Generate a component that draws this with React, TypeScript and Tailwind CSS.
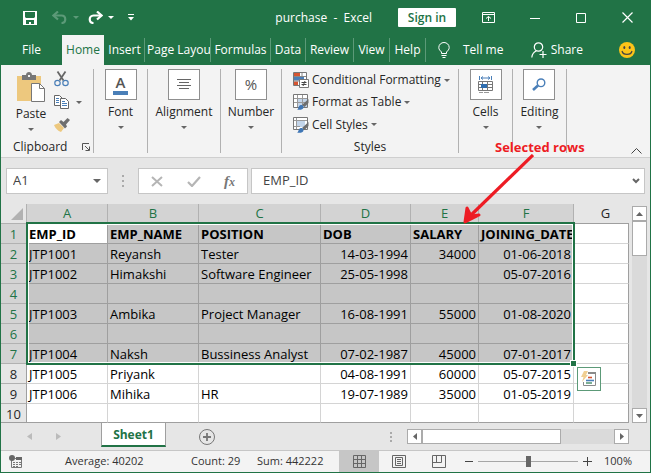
import React from "react";

type Row = [string, string, string, string, string, string];

const columns = ["A", "B", "C", "D", "E", "F", "G"];

const rows: Row[] = [
  ["EMP_ID", "EMP_NAME", "POSITION", "DOB", "SALARY", "JOINING_DATE"],
  ["JTP1001", "Reyansh", "Tester", "14-03-1994", "34000", "01-06-2018"],
  ["JTP1002", "Himakshi", "Software Engineer", "25-05-1998", "", "05-07-2016"],
  ["", "", "", "", "", ""],
  ["JTP1003", "Ambika", "Project Manager", "16-08-1991", "55000", "01-08-2020"],
  ["", "", "", "", "", ""],
  ["JTP1004", "Naksh", "Bussiness Analyst", "07-02-1987", "45000", "07-01-2017"],
  ["JTP1005", "Priyank", "", "04-08-1991", "60000", "05-07-2015"],
  ["JTP1006", "Mihika", "HR", "19-07-1989", "35000", "01-05-2019"],
  ["", "", "", "", "", ""],
];

const SELECTED_ROWS = 7;

function Caret({ className = "text-[#666]" }: { className?: string }) {
  return (
    <svg width="6" height="3" viewBox="0 0 6 3" className={`shrink-0 ${className}`} aria-hidden="true">
      <path d="M0 0h6L3 3z" fill="currentColor" />
    </svg>
  );
}

function TitleBar() {
  return (
    <header className="flex h-[35px] items-center pr-[17px] text-white">
      <button aria-label="Save" className="ml-[22px]">
        <svg width="14" height="14" viewBox="0 0 14 14">
          <path d="M0 0h14v14H0z" fill="#fff" />
          <path d="M2 1h10v5l-1 1H3L2 6zM3 9h8v4H8v-2H6v2H3z" fill="#217346" />
        </svg>
      </button>
      <button aria-label="Undo" className="ml-[15px] flex items-center gap-[6px] text-[#5c9a78]">
        <svg width="15" height="13" viewBox="0 0 15 13" fill="none" stroke="currentColor">
          <path d="M2 4.500h7.500c5 0 5 7.500 0 7.500" strokeWidth="2.200" />
          <path d="M6 .5L1.500 4.500 6 8.500" strokeWidth="2.200" />
        </svg>
        <Caret className="text-[#5c9a78]" />
      </button>
      <button aria-label="Redo" className="ml-[9px] flex items-center gap-[5px]">
        <svg width="15" height="13" viewBox="0 0 15 13" fill="none" stroke="#fff">
          <path d="M13 4.500H5.500c-5 0-5 7.500 0 7.500" strokeWidth="2.200" />
          <path d="M9 .5l4.500 4L9 8.500" strokeWidth="2.200" />
        </svg>
        <Caret className="text-white" />
      </button>
      <button aria-label="Customize quick access toolbar" className="ml-[14px]">
        <svg width="6" height="7" viewBox="0 0 6 7" fill="#fff">
          <path d="M0 0h6v1H0zM0 3h6L3 6.500z" />
        </svg>
      </button>
      <h1 className="flex-1 whitespace-pre pr-[26px] text-right text-[12px]">purchase  -  Excel</h1>
      <button className="h-[19px] w-[58px] rounded-[1px] bg-white text-[12px] font-semibold leading-[18px] text-[#217346]">
        Sign in
      </button>
      <button aria-label="Ribbon display options" className="ml-[26px]">
        <svg width="13" height="11" viewBox="0 0 13 11" fill="none" stroke="#fff">
          <path d="M.5.5h12v10H.5zM.5 2.500h12M6.500 9V4.500M4 6.500l2.500-2 2.500 2" />
        </svg>
      </button>
      <button aria-label="Minimize" className="ml-[35px]">
        <svg width="10" height="10" viewBox="0 0 10 10"><path d="M0 5.500h10" stroke="#fff" /></svg>
      </button>
      <button aria-label="Maximize" className="ml-9">
        <svg width="10" height="10" viewBox="0 0 10 10"><path d="M.5.5h9v9h-9z" fill="none" stroke="#fff" /></svg>
      </button>
      <button aria-label="Close" className="ml-9">
        <svg width="11" height="11" viewBox="0 0 11 11"><path d="M.5.5l10 10m0-10l-10 10" stroke="#fff" strokeWidth="1.200" /></svg>
      </button>
    </header>
  );
}

const tabs = [
  { name: "Insert", width: "w-[40px]" },
  { name: "Page Layout", width: "w-[66px]" },
  { name: "Formulas", width: "w-[60px]" },
  { name: "Data", width: "w-[35px]" },
  { name: "Review", width: "w-[48px]" },
  { name: "View", width: "w-[36px]" },
  { name: "Help", width: "w-[36px]" },
];

function TabBar() {
  return (
    <nav className="flex h-[30px] items-stretch text-[12px] text-white">
      <button className="w-[61px]">File</button>
      <button className="mr-px w-[42px] bg-[#f3f3f3] text-[#217346]">Home</button>
      {tabs.map((t) => (
        <button
          key={t.name}
          className={`${t.width} my-[3px] overflow-hidden whitespace-nowrap border-r border-[#5c9a78] ${
            t.name === "Page Layout" ? "pl-[2px] text-left" : "text-center"
          }`}
        >
          {t.name}
        </button>
      ))}
      <button className="ml-3 flex items-center gap-[13px]">
        <svg width="12" height="16" viewBox="0 0 12 16" fill="none" stroke="#fff" aria-hidden="true">
          <path d="M3.500 11.500V10C2 8.500.8 7.500.8 5.500a5.200 5 0 0 1 10.400 0C11.200 7.500 10 8.500 8.500 10v1.500zM3.500 13.500h5M4.500 15.500h3" />
        </svg>
        Tell me
      </button>
      <button className="ml-auto mr-[36px] flex items-center gap-1">
        <svg width="16" height="16" viewBox="0 0 16 16" fill="none" stroke="#fff" strokeWidth="1.200" aria-hidden="true">
          <circle cx="7.500" cy="5" r="4.200" />
          <path d="M.8 15.500c.3-3.500 2-5.500 4.500-6.500M12 9v7M8.500 12.500h7" />
        </svg>
        Share
      </button>
      <button aria-label="Feedback" className="mr-[15px]">
        <svg width="16" height="16" viewBox="0 0 16 16">
          <circle cx="8" cy="8" r="8" fill="#fcc419" />
          <ellipse cx="5.300" cy="5.500" rx="1" ry="1.500" fill="#444" />
          <ellipse cx="10.700" cy="5.500" rx="1" ry="1.500" fill="#444" />
          <path d="M3 9c1 4.500 9 4.500 10 0" fill="none" stroke="#444" strokeWidth="1.200" />
        </svg>
      </button>
    </nav>
  );
}

function BigButton({ label, width, children }: { label: string; width: string; children: React.ReactNode }) {
  return (
    <div className={`${width} flex h-[84px] shrink-0 justify-center border-r border-[#b1b1b1]`}>
      <button className="flex flex-col items-center">
        <span className="flex h-[31px] w-8 items-center justify-center border border-[#8f8f8f] bg-white">{children}</span>
        <span className="mt-[3px] leading-[18px]">{label}</span>
        <Caret className="mt-[5px] text-[#666]" />
      </button>
    </div>
  );
}

function Brush() {
  return (
    <>
      <path d="M15.500 5v4l-4 4-2.500-2z" fill="#6e6e6e" />
      <path d="M4 15.500c2-.5 1-3.500 3.500-4.500 3-.5 4 2.500 2 4-1.500 1-4 1-5.500.5z" fill="#3f76b5" />
    </>
  );
}

function ConditionalIcon() {
  return (
    <svg width="16" height="16" viewBox="0 0 16 16" aria-hidden="true">
      <path d="M.5.500h13v13H.5z" fill="#fff" stroke="#777" />
      <path d="M1 1h6v3H1zM1 9.500h4V13H1z" fill="#d65532" />
      <path d="M1 5h10v3.500H1z" fill="#4a7fb8" />
      <path d="M9 1v3M1 4.500h12M1 9h5" stroke="#888" />
      <path d="M6.500 7.500h9v8h-9z" fill="#fff" stroke="#777" />
      <path d="M8.500 10.500h5M8.500 12.500h5M12 9l-2 5" stroke="#444" />
    </svg>
  );
}

function TableIcon() {
  return (
    <svg width="16" height="16" viewBox="0 0 16 16" aria-hidden="true">
      <path d="M.5.500h14v13H.5z" fill="#fff" stroke="#777" />
      <path d="M5 5h9v8H5z" fill="#c3d5ea" />
      <path d="M1 4.500h13M1 8.500h13M4.500 1v12M9.500 1v12" stroke="#999" />
      <Brush />
    </svg>
  );
}

function CellStyleIcon() {
  return (
    <svg width="16" height="16" viewBox="0 0 16 16" aria-hidden="true">
      <path d="M.5.500h14v12H.5z" fill="#fff" stroke="#777" />
      <path d="M4 4h8v6H4z" fill="#c3d5ea" />
      <path d="M1 3.500h13M1 9.500h6M3.500 1v11" stroke="#999" />
      <Brush />
    </svg>
  );
}

function Ribbon() {
  return (
    <section aria-label="Home ribbon" className="flex h-[93px] border-b border-[#cfcfcf] bg-[#f3f3f3] pt-1 text-[12px] text-[#262626]">
      <div className="flex h-[84px] w-[93px] shrink-0 flex-col border-r border-[#b1b1b1]">
        <div className="flex h-[74px]">
          <button className="ml-[14px] flex w-8 flex-col items-center">
            <svg width="29" height="31" viewBox="0 0 29 31" className="mt-[3px] shrink-0" aria-hidden="true">
              <path d="M0 4h24v25H0z" fill="#edc87e" />
              <path d="M5 3h4c0-4 6-4 6 0h4v5H5z" fill="#777" />
              <path d="M11 3h2v2h-2z" fill="#f3f3f3" />
              <path d="M14.500 11.500h8l5 5v13h-13z" fill="#fff" stroke="#777" />
              <path d="M22.500 11.500v5h5" fill="none" stroke="#777" />
            </svg>
            <span className="mt-[2px] leading-[18px]">Paste</span>
            <Caret className="mt-[5px] text-[#666]" />
          </button>
          <div className="ml-[7px] flex flex-col items-start">
            <button aria-label="Cut" className="mt-[2px]">
              <svg width="16" height="16" viewBox="0 0 16 16" fill="none">
                <path d="M3.500.5l6 9M11.500.5l-6 9" stroke="#666" strokeWidth="1.800" />
                <circle cx="3.500" cy="12" r="2.700" stroke="#4a7fb8" strokeWidth="1.200" />
                <circle cx="11.500" cy="12" r="2.700" stroke="#4a7fb8" strokeWidth="1.200" />
              </svg>
            </button>
            <button aria-label="Copy" className="mt-2 flex items-center gap-[6px]">
              <svg width="16" height="14" viewBox="0 0 16 14" fill="#fff">
                <path d="M.5.500h5l3 3v7h-8z" stroke="#666" />
                <path d="M2 3.500h3M2 5.500h3M2 7.500h3" stroke="#4a7fb8" />
                <path d="M6.500 3.500h5l3 3v7h-8z" stroke="#666" />
                <path d="M8 6.500h3M8 8.500h5M8 10.500h5" stroke="#4a7fb8" />
              </svg>
              <Caret />
            </button>
            <button aria-label="Format painter" className="mt-[9px]">
              <svg width="16" height="14" viewBox="0 0 16 14">
                <path d="M0 7l5-2 5 5-3 4C4 13 1 10 0 7z" fill="#edc87e" />
                <path d="M5 4l2-2 2.500 2L13.500 0 16 2l-4 4.500 1 2-2 2z" fill="#6e6e6e" />
              </svg>
            </button>
          </div>
        </div>
        <div className="flex items-center justify-between pl-3 pr-[3px] leading-[12px]">
          Clipboard
          <button aria-label="Clipboard settings">
            <svg width="8" height="8" viewBox="0 0 8 8" fill="none" stroke="#555">
              <path d="M.5 7V.500H7M3 3l4 4M7.500 3.500v4h-4" />
            </svg>
          </button>
        </div>
      </div>
      <BigButton label="Font" width="w-[54px]">
        <span className="border-b-4 border-[#4a7fb8] px-[3px] text-[15px] font-semibold leading-[17px] text-[#555]">A</span>
      </BigButton>
      <BigButton label="Alignment" width="w-[73px]">
        <svg width="14" height="12" viewBox="0 0 14 12" stroke="#666" aria-hidden="true">
          <path d="M0 .5h14M2 3.500h10M0 6.500h14M2 9.500h10" />
        </svg>
      </BigButton>
      <BigButton label="Number" width="w-[61px]">
        <span className="text-[15px] text-[#555]">%</span>
      </BigButton>
      <div className="flex h-[84px] w-[177px] shrink-0 flex-col border-r border-[#b1b1b1] pl-[11px]">
        {[
          { label: "Conditional Formatting", icon: <ConditionalIcon /> },
          { label: "Format as Table", icon: <TableIcon /> },
          { label: "Cell Styles", icon: <CellStyleIcon /> },
        ].map((item) => (
          <button key={item.label} className="flex h-[23px] items-center gap-[3px] whitespace-nowrap">
            {item.icon}
            {item.label}
            <Caret />
          </button>
        ))}
        <div className="mt-[5px] pr-[11px] text-center leading-[12px]">Styles</div>
      </div>
      <BigButton label="Cells" width="w-[54px]">
        <svg width="16" height="17" viewBox="0 0 16 17" fill="none" aria-hidden="true">
          <path d="M1.500 0v4M13.500 0v4M3 2h9M5 .5L3 2l2 1.500M10 .5L12 2l-2 1.500" stroke="#4a7fb8" />
          <path d="M.5 5.500h14v9H.5zM.5 8.500h14M.5 11.500h14M4.500 5.500v9M9.500 5.500v9" stroke="#777" />
          <path d="M3 8h6v4H3z" fill="#2f6eb0" />
          <path d="M1 16.500h4M6 16.500h5" stroke="#999" />
        </svg>
      </BigButton>
      <BigButton label="Editing" width="w-[54px]">
        <svg width="14" height="13" viewBox="0 0 14 13" fill="none" stroke="#4a7fb8" aria-hidden="true">
          <circle cx="9" cy="4.800" r="3.800" strokeWidth="1.400" />
          <path d="M6 7.500L1 12" strokeWidth="2.600" />
        </svg>
      </BigButton>
      <button aria-label="Collapse ribbon" className="mb-[3px] ml-auto mr-2 self-end">
        <svg width="11" height="6" viewBox="0 0 11 6" fill="none" stroke="#444"><path d="M.5 5.500l5-5 5 5" /></svg>
      </button>
    </section>
  );
}

function FormulaBar() {
  return (
    <div className="flex h-[46px] items-center bg-[#e6e6e6] pl-[5px] pr-[5px] text-[13px] text-[#444]">
      <div className="flex h-[26px] w-[102px] items-center border border-[#c6c6c6] bg-white pr-[6px]">
        <input aria-label="Name box" defaultValue="A1" className="w-0 flex-1 bg-transparent pl-[6px] outline-none" />
        <button aria-label="Open name list">
          <svg width="8" height="4" viewBox="0 0 8 4"><path d="M0 0h8L4 4z" fill="#666" /></svg>
        </button>
      </div>
      <div className="flex w-[30px] flex-col items-center gap-[3px]" aria-hidden="true">
        <span className="size-[2px] bg-[#aaa]" />
        <span className="size-[2px] bg-[#aaa]" />
        <span className="size-[2px] bg-[#aaa]" />
      </div>
      <div className="flex h-[26px] w-[110px] items-center justify-between border border-[#c6c6c6] bg-white pl-3 pr-3">
        <button aria-label="Cancel">
          <svg width="12" height="11" viewBox="0 0 12 11"><path d="M1 1l10 9M11 1L1 10" stroke="#b5b5b5" strokeWidth="2" /></svg>
        </button>
        <button aria-label="Enter">
          <svg width="14" height="11" viewBox="0 0 14 11"><path d="M1 6l4 4 8-9" stroke="#b5b5b5" strokeWidth="2.200" fill="none" /></svg>
        </button>
        <button aria-label="Insert function" className="font-['Liberation_Serif',serif] text-[15px] font-bold italic leading-none text-[#777]">
          f<span className="text-[12px]">x</span>
        </button>
      </div>
      <div className="ml-[3px] flex h-[26px] flex-1 items-center border border-[#c6c6c6] bg-white pr-1">
        <input aria-label="Formula" defaultValue="EMP_ID" className="w-0 flex-1 bg-transparent pl-[11px] outline-none" />
        <button aria-label="Expand formula bar">
          <svg width="8" height="6" viewBox="0 0 8 6"><path d="M1 1l3 3 3-3" stroke="#666" strokeWidth="2" fill="none" /></svg>
        </button>
      </div>
    </div>
  );
}

function Grid() {
  return (
    <div className="relative min-w-0 flex-1">
      <table className="w-full table-fixed border-separate border-spacing-0 text-[13px] text-black">
        <colgroup>
          <col className="w-[26px]" />
          <col className="w-[81px]" />
          <col className="w-[91px]" />
          <col className="w-[122px]" />
          <col className="w-[90px]" />
          <col className="w-[68px]" />
          <col className="w-[95px]" />
          <col />
        </colgroup>
        <thead>
          <tr>
            <th aria-label="Select all" className="h-5 border-b border-r border-[#b1b1b1] p-0">
              <svg width="12" height="12" viewBox="0 0 12 12" className="ml-auto mr-[3px]"><path d="M12 0v12H0z" fill="#b1b1b1" /></svg>
            </th>
            {columns.map((c) => (
              <th
                key={c}
                scope="col"
                className={`h-5 border-b p-0 font-normal leading-[19px] ${
                  c === "G" ? "border-[#9f9f9f] pl-2 text-[#262626]" : "border-r border-[#b1b1b1] bg-[#d3d3d3] text-[#217346]"
                }`}
              >
                {c}
              </th>
            ))}
          </tr>
        </thead>
        <tbody>
          {rows.map((row, r) => {
            const selected = r < SELECTED_ROWS;
            const last = r === rows.length - 1;
            return (
              <tr key={r}>
                <th
                  scope="row"
                  className={`border-b border-r px-0 pb-0 pt-[2px] font-normal ${last ? "h-[19px] border-b-[#9f9f9f] leading-[16px]" : "h-5 border-b-[#b1b1b1] leading-[17px]"} ${
                    selected ? "border-r-[#217346] bg-[#d3d3d3] text-[#217346]" : "border-r-[#9f9f9f] bg-[#e6e6e6] text-[#262626]"
                  }`}
                >
                  {r + 1}
                </th>
                {row.map((value, c) => (
                  <td
                    key={c}
                    className={`overflow-hidden whitespace-nowrap border-b border-r px-[2px] pb-0 pt-[2px] ${
                      last ? "h-[19px] leading-[16px]" : "h-5 leading-[17px]"
                    } ${r > 0 && c > 2 ? "text-right" : "text-left"} ${r === 0 ? "font-bold" : ""} ${
                      selected
                        ? r === 0 && c === 0
                          ? "border-[#9f9f9f] bg-white"
                          : "border-[#9f9f9f] bg-[#c6c6c6]"
                        : last
                          ? "border-b-[#9f9f9f] border-r-[#d4d4d4] bg-white"
                          : "border-[#d4d4d4] bg-white"
                    }`}
                  >
                    {value}
                  </td>
                ))}
                <td className={`border-b border-r border-r-[#9f9f9f] bg-white p-0 ${last ? "border-b-[#9f9f9f]" : "border-b-[#d4d4d4]"}`} />
              </tr>
            );
          })}
        </tbody>
      </table>
      <div className="pointer-events-none absolute left-[25px] top-[18px] h-[143px] w-[549px] border-2 border-[#217346] shadow-[inset_0_0_0_1px_#fff]" />
      <div className="absolute left-[569px] top-[156px] size-[7px] border border-white bg-[#217346]" />
      <button aria-label="Quick analysis" className="absolute left-[576px] top-[163px] flex size-6 items-center justify-center border border-[#5c9a78] bg-white">
        <svg width="16" height="16" viewBox="0 0 16 16" fill="none">
          <path d="M8 2.500h6.500v12H2.500V11" stroke="#8a8a8a" />
          <path d="M7 1h8v2H7z" fill="#8a8a8a" />
          <path d="M7 6.500h4" stroke="#d65532" strokeWidth="1.600" />
          <path d="M5 9.500h8" stroke="#4a7fb8" strokeWidth="1.600" />
          <path d="M5 12h6" stroke="#5c9a78" strokeWidth="1.600" />
          <path d="M3 0h4L5 4h2L1 11l1.500-5H0z" fill="#f0cf92" />
        </svg>
      </button>
    </div>
  );
}

const scrollButton = "flex size-[15px] shrink-0 items-center justify-center border border-[#ababab] bg-white";

function VerticalScroll() {
  return (
    <div className="w-[21px] shrink-0 pl-[3px] pt-[2px]">
      <div className="flex h-full w-[15px] flex-col bg-[#dadada]">
        <button aria-label="Scroll up" className={scrollButton}>
          <svg width="7" height="4" viewBox="0 0 7 4"><path d="M0 4h7L3.500 0z" fill="#666" /></svg>
        </button>
        <div className="h-[35px] border border-[#ababab] bg-white" />
        <button aria-label="Scroll down" className={`${scrollButton} mt-auto`}>
          <svg width="7" height="4" viewBox="0 0 7 4"><path d="M0 0h7L3.500 4z" fill="#666" /></svg>
        </button>
      </div>
    </div>
  );
}

function SheetBar() {
  return (
    <div className="flex h-[27px] items-center bg-[#e6e6e6] pr-[21px]">
      <button aria-label="Previous sheet" className="ml-[26px]">
        <svg width="5" height="7" viewBox="0 0 5 7"><path d="M5 0v7L0 3.500z" fill="#bbb" /></svg>
      </button>
      <button aria-label="Next sheet" className="ml-6">
        <svg width="5" height="7" viewBox="0 0 5 7"><path d="M0 0v7l5-3.500z" fill="#bbb" /></svg>
      </button>
      <button className="-mt-px ml-10 h-[25px] w-[65px] self-start border-x border-b-2 border-x-[#9f9f9f] border-b-[#217346] bg-white pt-[3px] text-[12px] font-bold text-[#217346]">
        Sheet1
      </button>
      <button aria-label="New sheet" className="ml-[33px]">
        <svg width="16" height="16" viewBox="0 0 16 16" fill="none" stroke="#777">
          <circle cx="8" cy="8" r="7.500" />
          <path d="M8 4v8M4 8h8" strokeWidth="1.800" />
        </svg>
      </button>
      <div className="ml-auto mr-[15px] flex flex-col gap-[2px]" aria-hidden="true">
        <span className="size-[2px] bg-[#aaa]" />
        <span className="size-[2px] bg-[#aaa]" />
        <span className="size-[2px] bg-[#aaa]" />
      </div>
      <div className="flex w-[222px] bg-[#dadada]">
        <button aria-label="Scroll left" className={scrollButton}>
          <svg width="4" height="7" viewBox="0 0 4 7"><path d="M4 0v7L0 3.500z" fill="#666" /></svg>
        </button>
        <div className="h-[15px] w-[139px] border border-[#ababab] bg-white" />
        <button aria-label="Scroll right" className={`${scrollButton} ml-auto`}>
          <svg width="4" height="7" viewBox="0 0 4 7"><path d="M0 0v7l4-3.500z" fill="#666" /></svg>
        </button>
      </div>
    </div>
  );
}

function StatusBar() {
  return (
    <footer className="flex h-[22px] items-center border-t border-[#c6c6c6] bg-[#f3f3f3] text-[11px] text-[#333]">
      <svg width="14" height="14" viewBox="0 0 14 14" className="ml-2" aria-hidden="true">
        <path d="M2.500 5v7.500h10v-9H6" fill="none" stroke="#777" />
        <path d="M7 2h6v3H7z" fill="#666" />
        <path d="M4 7.500h2M7 7.500h2M10 7.500h2M4 9.500h2M7 9.500h2M10 9.500h2M4 11.500h2M7 11.500h2" stroke="#777" />
        <circle cx="3" cy="3" r="3" fill="#666" />
      </svg>
      <span className="ml-[42px] w-[126px]">Average: 40202</span>
      <span className="w-[66px]">Count: 29</span>
      <span>Sum: 442222</span>
      <div className="ml-auto flex h-full">
        <button aria-label="Normal view" className="flex w-10 items-center justify-center bg-[#c6c6c6]">
          <svg width="13" height="13" viewBox="0 0 13 13" fill="none" stroke="#666"><path d="M.5.500h12v12H.5zM4.500 0v13M8.500 0v13M0 4.500h13M0 8.500h13" /></svg>
        </button>
        <button aria-label="Page layout view" className="flex w-10 items-center justify-center">
          <svg width="14" height="13" viewBox="0 0 14 13" fill="none" stroke="#666"><path d="M.5.500h13v12H.5zM3.500 2.500h7v8h-7zM5 4.500h4M5 6.500h4M5 8.500h4" /></svg>
        </button>
        <button aria-label="Page break preview" className="flex w-10 items-center justify-center">
          <svg width="14" height="13" viewBox="0 0 14 13" fill="none" stroke="#666"><path d="M.5.500h13v12H.5zM.5 7.500h9V.500M4.500 .5v7" /></svg>
        </button>
      </div>
      <button aria-label="Zoom out" className="ml-[6px]">
        <svg width="8" height="9" viewBox="0 0 8 9"><path d="M0 4.500h8" stroke="#444" /></svg>
      </button>
      <input
        type="range"
        aria-label="Zoom"
        min={0}
        max={200}
        defaultValue={100}
        className="mx-[5px] h-[11px] w-[100px] appearance-none bg-[linear-gradient(#a6a6a6,#a6a6a6)] bg-[length:100%_1px] bg-center bg-no-repeat [&::-webkit-slider-thumb]:h-[11px] [&::-webkit-slider-thumb]:w-[5px] [&::-webkit-slider-thumb]:appearance-none [&::-webkit-slider-thumb]:bg-[#666]"
      />
      <button aria-label="Zoom in">
        <svg width="9" height="9" viewBox="0 0 9 9"><path d="M0 4.500h9M4.500 0v9" stroke="#444" /></svg>
      </button>
      <span className="ml-3 mr-[18px]">100%</span>
    </footer>
  );
}

export default function App() {
  return (
    <div className="relative border-x border-b border-[#217346] bg-[#217346] font-['Open_Sans','Noto_Sans',sans-serif]">
      <TitleBar />
      <TabBar />
      <main>
        <Ribbon />
        <FormulaBar />
        <div className="flex bg-[#e6e6e6]">
          <Grid />
          <VerticalScroll />
        </div>
        <SheetBar />
      </main>
      <StatusBar />
      <p className="absolute left-[494px] top-[138px] whitespace-nowrap text-[13px] font-bold leading-[18px] text-[#ed1c24]">Selected rows</p>
      <svg width="72" height="70" viewBox="0 0 72 70" className="pointer-events-none absolute left-[461px] top-[154px]" fill="none" stroke="#ed1c24" aria-hidden="true">
        <path d="M71 1L6 64" strokeWidth="3.200" />
        <path d="M5 54L3 68l14-7-8 1z" strokeWidth="3" strokeLinejoin="round" fill="#ed1c24" />
      </svg>
    </div>
  );
}
